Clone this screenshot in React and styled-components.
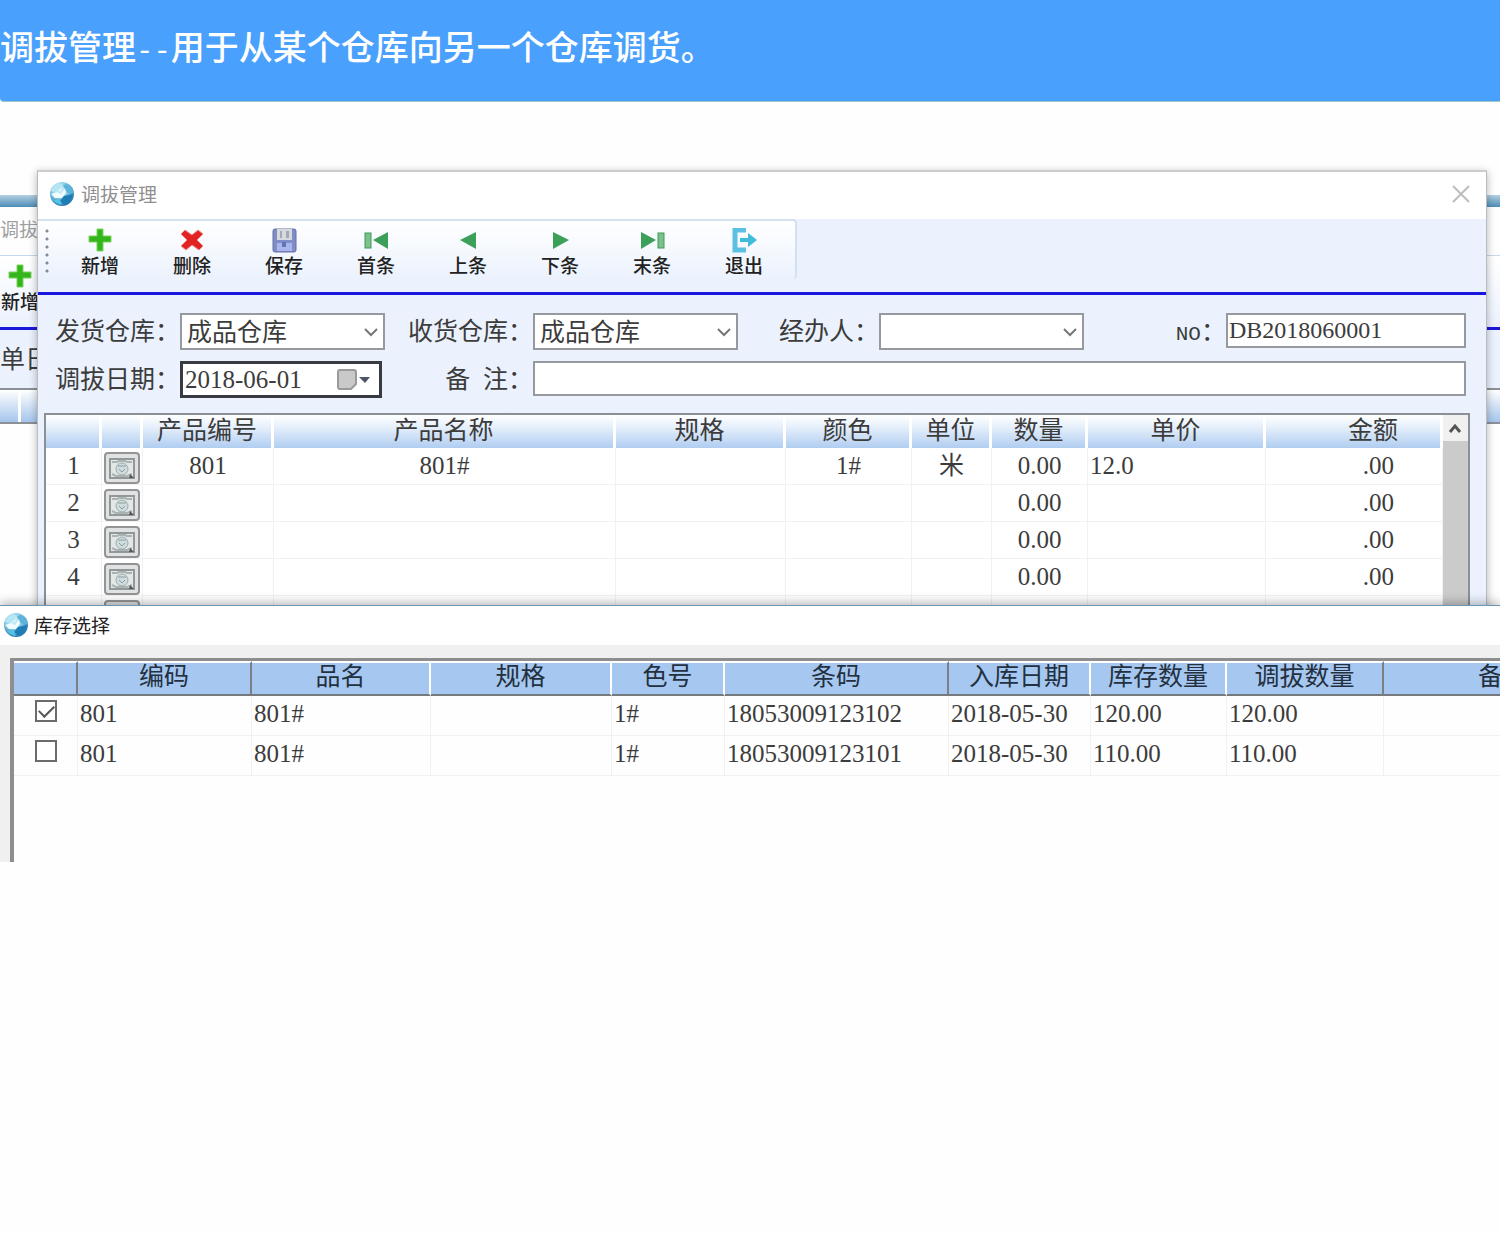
import React from "react";
import styled, { createGlobalStyle } from "styled-components";

const COLORS = {
  banner: "#4aa0fd",
  page: "#fefefe",
  form: "#ebf2fd",
  rule: "#1a17dc",
  line: "#f1f1f1",
  text: "#3c3c3c",
};

const tools = [
  { id: "add", label: "新增" },
  { id: "remove", label: "删除" },
  { id: "save", label: "保存" },
  { id: "first", label: "首条" },
  { id: "prev", label: "上条" },
  { id: "next", label: "下条" },
  { id: "last", label: "末条" },
  { id: "exit", label: "退出" },
];

const productColumns = [
  { title: "", width: 56 },
  { title: "", width: 41 },
  { title: "产品编号", width: 131 },
  { title: "产品名称" },
  { title: "规格", width: 170 },
  { title: "颜色", width: 126 },
  { title: "单位", width: 80 },
  { title: "数量", width: 96 },
  { title: "单价", width: 178 },
  { title: "金额", width: 177, align: "right", pad: 42 },
];

const products = [
  { id: 1, code: "801", name: "801#", color: "1#", unit: "米", price: "12.0" },
  { id: 2 },
  { id: 3 },
  { id: 4 },
  { id: 5 },
];

const stockColumns = [
  { title: "", width: 64, dark: true },
  { title: "编码", width: 174, dark: true },
  { title: "品名", width: 179 },
  { title: "规格", width: 181 },
  { title: "色号", width: 113 },
  { title: "条码", width: 224, dark: true },
  { title: "入库日期", width: 142 },
  { title: "库存数量", width: 136 },
  { title: "调拔数量", width: 157, dark: true },
  { title: "备注", width: 240 },
];

const stock = [
  {
    checked: true,
    cells: ["801", "801#", "", "1#", "18053009123102", "2018-05-30", "120.00", "120.00", ""],
  },
  {
    checked: false,
    cells: ["801", "801#", "", "1#", "18053009123101", "2018-05-30", "110.00", "110.00", ""],
  },
];

const Globe = () => (
  <svg width="28" height="28" viewBox="0 0 28 28" aria-hidden="true">
    <defs>
      <radialGradient id="globe" cx="0.4" cy="0.3" r="0.75">
        <stop offset="0" stopColor="#eafaff" />
        <stop offset="0.5" stopColor="#7cc6e4" />
        <stop offset="1" stopColor="#1c6ba3" />
      </radialGradient>
    </defs>
    <circle cx="14" cy="14" r="12" fill="url(#globe)" />
    <path d="M3 11 Q5 4 12 3 L15 6 L11 10 L6 12 Z" fill="#b5e6f4" />
    <path d="M15 5 L19 4 Q25 8 26 13 L20 13 L17 10 Z" fill="#5cb4da" />
    <path d="M3 14 L9 12 L13 14 L17 8 L18 13 L14 18 L7 18 Z" fill="#f1fcff" />
    <path d="M16 16 L25 14 Q24 22 17 25 L12 21 Z" fill="#1f7db6" />
    <path d="M5 20 L12 20 L14 25 Q8 24 5 20 Z" fill="#4fc3e8" />
  </svg>
);

const ToolIcon = ({ id }) => {
  const shapes = {
    add: (
      <path d="M9 1h6v7h8v6h-8v9H9v-9H1V8h8z" fill="#35b51c" stroke="#7bd45c" />
    ),
    remove: (
      <path
        d="M5 2l7 5 6-5 5 4-6 6 6 6-4 4-7-5-6 5-5-4 6-6-6-6z"
        fill="#e12423"
        stroke="#f08a84"
      />
    ),
    save: (
      <>
        <rect x="1" y="1" width="23" height="23" rx="2" fill="#7f8cc8" stroke="#6670a4" />
        <rect x="5" y="1" width="15" height="11" fill="#d6d9dd" />
        <path d="M8 3h2v7H8zM14 3h3v7h-3z" fill="#a3a9b4" />
        <rect x="5" y="15" width="15" height="8" fill="#a9b6ec" />
        <rect x="10" y="14" width="4" height="5" fill="#6473b4" />
      </>
    ),
    first: (
      <>
        <rect x="1" y="5" width="6" height="15" fill="#7cc18c" stroke="#3e9a58" />
        <path d="M9 12L24 4v17z" fill="#3da05a" />
      </>
    ),
    prev: <path d="M4 12L20 4v17z" fill="#3da05a" />,
    next: <path d="M21 12L5 4v17z" fill="#3da05a" />,
    last: (
      <>
        <path d="M16 12L1 4v17z" fill="#3da05a" />
        <rect x="18" y="5" width="6" height="15" fill="#7cc18c" stroke="#3e9a58" />
      </>
    ),
    exit: (
      <>
        <path d="M14 2H3v20h11" fill="none" stroke="#5cc0e2" strokeWidth="5" />
        <path d="M8 10h8V5l9 7-9 7v-5H8z" fill="#3fbcd8" />
      </>
    ),
  };
  return (
    <svg width="25" height="25" viewBox="0 0 25 25" aria-hidden="true">
      {shapes[id]}
    </svg>
  );
};

const PickIcon = () => (
  <svg width="28" height="23" viewBox="0 0 28 23" aria-hidden="true">
    <rect x="2" y="2" width="24" height="19" fill="#e3e8e7" stroke="#92979a" strokeWidth="2" />
    <path d="M4 5h5l2-1h6l2 1h5M4 17l4 2h11l5-2" stroke="#aab2b2" strokeWidth="2" fill="none" />
    <circle cx="14" cy="12" r="6" fill="#cfdcdd" stroke="#9eacae" />
    <path d="M10 9h8M11 12l3 3 3-3" stroke="#8b9da0" fill="none" />
    <path d="M22 17l4 4h-5z" fill="#555" />
  </svg>
);

const Chevron = () => (
  <svg width="16" height="10" viewBox="0 0 16 10" aria-hidden="true">
    <path d="M2 2l6 6 6-6" fill="none" stroke="#777" strokeWidth="2" />
  </svg>
);

const Warehouse = ({ id, label, value }) => (
  <>
    <Label htmlFor={id}>{label}：</Label>
    <SelectBox>
      <Select id={id} defaultValue={value}>
        <option>{value}</option>
      </Select>
      <Chevron />
    </SelectBox>
  </>
);

const ProductTable = () => (
  <Table>
    <colgroup>
      {productColumns.map((col, i) => (
        <Col key={i} $width={col.width} />
      ))}
    </colgroup>
    <thead>
      <tr>
        {productColumns.map((col, i) => (
          <ProductHead key={i} $align={col.align} $pad={col.pad}>
            {col.title}
          </ProductHead>
        ))}
      </tr>
    </thead>
    <tbody>
      {products.map((row) => (
        <tr key={row.id}>
          <ProductCell>{row.id}</ProductCell>
          <ProductCell>
            <PickButton type="button" aria-label="选择产品">
              <PickIcon />
            </PickButton>
          </ProductCell>
          <ProductCell>{row.code}</ProductCell>
          <ProductCell>{row.name}</ProductCell>
          <ProductCell />
          <ProductCell>{row.color}</ProductCell>
          <ProductCell>{row.unit}</ProductCell>
          <ProductCell>0.00</ProductCell>
          <ProductCell $align="left" $pad={2}>
            {row.price}
          </ProductCell>
          <ProductCell $align="right" $pad={48}>
            .00
          </ProductCell>
        </tr>
      ))}
    </tbody>
  </Table>
);

const StockTable = () => (
  <StockGrid>
    <colgroup>
      {stockColumns.map((col, i) => (
        <Col key={i} $width={col.width} />
      ))}
    </colgroup>
    <thead>
      <tr>
        {stockColumns.map((col, i) => (
          <StockHead key={i} $dark={col.dark}>
            {col.title}
          </StockHead>
        ))}
      </tr>
    </thead>
    <tbody>
      {stock.map((row, i) => (
        <tr key={i}>
          <CheckCell>
            <Checkbox
              type="checkbox"
              defaultChecked={row.checked}
              aria-label={row.cells[4]}
            />
          </CheckCell>
          {row.cells.map((cell, j) => (
            <StockCell key={j}>{cell}</StockCell>
          ))}
        </tr>
      ))}
    </tbody>
  </StockGrid>
);

export default function App() {
  return (
    <>
      <GlobalStyle />
      <Banner>
        调拔管理<Dash>--</Dash>用于从某个仓库向另一个仓库调货。
      </Banner>
      <Desktop>
        <BackWindow>
          <BackFrame />
          <BackTitle>调拔管理</BackTitle>
          <BackTools>
            <Tool type="button" $narrow>
              <ToolIcon id="add" />
              新增
            </Tool>
          </BackTools>
          <BackForm>单日期</BackForm>
          <BackHead>
            <span />
            <span />
          </BackHead>
        </BackWindow>

        <MainWindow>
          <TitleBar>
            <Globe />
            <span>调拔管理</span>
            <Close type="button" aria-label="关闭">
              <svg width="18" height="18" viewBox="0 0 18 18">
                <path d="M1 1l16 16M17 1L1 17" stroke="#bdbdbd" strokeWidth="2" />
              </svg>
            </Close>
          </TitleBar>
          <ToolArea>
            <ToolStrip>
              <Grip />
              {tools.map((tool) => (
                <Tool type="button" key={tool.id}>
                  <ToolIcon id={tool.id} />
                  {tool.label}
                </Tool>
              ))}
            </ToolStrip>
          </ToolArea>
          <Form>
            <Warehouse id="from" label="发货仓库" value="成品仓库" />
            <Warehouse id="to" label="收货仓库" value="成品仓库" />
            <Warehouse id="handler" label="经办人" value="" />
            <Label htmlFor="no">
              <Half>NO</Half>：
            </Label>
            <Input id="no" defaultValue="DB2018060001" />
            <Label htmlFor="date">调拔日期：</Label>
            <DateBox>
              <DateInput id="date" defaultValue="2018-06-01" />
              <svg width="34" height="22" viewBox="0 0 34 22" aria-hidden="true">
                <path d="M1 3q0-2 2-2h14q2 0 2 2v12l-5 5H3q-2 0-2-2z" fill="#c9c9c9" stroke="#9a9a9a" strokeWidth="2" />
                <path d="M22 8h11l-5 6z" fill="#4c5666" />
              </svg>
            </DateBox>
            <Label htmlFor="memo">
              备<Half> </Half>注：
            </Label>
            <Memo id="memo" />
          </Form>
          <ProductBox>
            <ProductTable />
            <ScrollBar>
              <svg width="25" height="26" viewBox="0 0 25 26" aria-hidden="true">
                <rect width="25" height="26" fill="#f0f0f0" />
                <path d="M7 17l5-6 5 6" fill="none" stroke="#555" strokeWidth="3" />
              </svg>
            </ScrollBar>
          </ProductBox>
        </MainWindow>
      </Desktop>

      <StockWindow>
        <StockTitle>
          <Globe />
          <span>库存选择</span>
        </StockTitle>
        <StockBody>
          <StockBox>
            <StockTable />
          </StockBox>
        </StockBody>
      </StockWindow>
    </>
  );
}

const GlobalStyle = createGlobalStyle`
  * {
    box-sizing: border-box;
  }
  body {
    margin: 0;
    background: ${COLORS.page};
    color: ${COLORS.text};
    font-family: "Liberation Serif", "Noto Sans CJK SC", sans-serif;
    font-size: 25px;
    overflow-x: hidden;
  }
  button, input, select {
    font: inherit;
    color: inherit;
  }
`;

const Banner = styled.header`
  height: 102px;
  padding-top: 22px;
  border-bottom: 1px solid #9cc6c8;
  border-bottom-left-radius: 4px;
  background: ${COLORS.banner};
  color: #fff;
  font-family: "Noto Sans CJK SC", sans-serif;
  font-size: 34px;
  font-weight: 500;
  line-height: 48px;
`;
const Dash = styled.span`
  font-family: "Liberation Mono", monospace;
  font-size: 29px;
`;
const Half = styled.span`
  font-family: "Liberation Mono", monospace;
  font-size: 21px;
`;

//Windows lie over one another, so they share one grid cell
const Desktop = styled.main`
  display: grid;
  grid-template-columns: minmax(0, 1fr);
  height: 503px;
  overflow: hidden;
`;

const BackWindow = styled.section`
  grid-area: 1 / 1;
  margin-top: 93px;
`;
const BackFrame = styled.div`
  height: 12px;
  background: linear-gradient(#b4d0e2, #4d8cb8);
`;
const BackTitle = styled.div`
  height: 48px;
  font-size: 19px;
  line-height: 48px;
  color: #a0a0a0;
`;
const BackTools = styled.div`
  height: 75px;
  padding-top: 1px;
  border-top: 1px solid #c5d9ee;
  border-bottom: 3px solid ${COLORS.rule};
  background: linear-gradient(#fff, ${COLORS.form});
`;
const BackForm = styled.div`
  height: 58px;
  background: ${COLORS.form};
  line-height: 60px;
`;
const BackHead = styled.div`
  display: grid;
  grid-template-columns: 18px 1fr;
  gap: 3px;
  height: 36px;
  border-top: 2px solid #8b9096;
  border-bottom: 2px solid #8b9096;

  span {
    background: linear-gradient(#fff, #a5c5ec);
  }
`;

const MainWindow = styled.section`
  grid-area: 1 / 1;
  z-index: 1;
  display: flex;
  flex-direction: column;
  margin: 68px 13px 0 37px;
  border: 1px solid #b9bcc0;
  border-top: 2px solid #cdcdcd;
  border-bottom: none;
  background: ${COLORS.form};
  box-shadow: 0 2px 8px rgba(0, 0, 0, 0.3);
`;
const TitleBar = styled.div`
  display: flex;
  align-items: center;
  gap: 5px;
  height: 47px;
  padding: 0 16px 4px 10px;
  background: #fff;
  font-size: 19px;
  color: #8f8f8f;
`;
const Close = styled.button`
  display: flex;
  margin-left: auto;
  padding: 0;
  border: none;
  background: none;
`;
const ToolArea = styled.div`
  height: 76px;
  border-bottom: 3px solid ${COLORS.rule};
`;
const ToolStrip = styled.div`
  display: flex;
  width: max-content;
  padding-right: 5px;
  border: 2px solid #d3e0ee;
  border-left: none;
  border-bottom: none;
  border-radius: 0 4px 4px 0;
  background: linear-gradient(#fff, ${COLORS.form});
`;
const Grip = styled.div`
  width: 4px;
  margin: 6px 5px 2px 7px;
  background: radial-gradient(circle, #858b95 1px, transparent 2px) 0 0 / 4px 8px;
`;
const Tool = styled.button`
  display: flex;
  flex-direction: column;
  align-items: center;
  gap: 2px;
  width: ${(props) => (props.$narrow ? "40px" : "92px")};
  height: 58px;
  padding: 7px 0 0;
  border: none;
  background: none;
  font-size: 19px;
  font-weight: 500;
  line-height: 24px;
  white-space: nowrap;
  color: #222;
`;

const Form = styled.form`
  display: grid;
  grid-template-columns: 126px 205px 148px 205px 141px 205px 1fr 240px;
  grid-auto-rows: 37px;
  row-gap: 11px;
  padding: 18px 20px 15px 16px;
`;
const Label = styled.label`
  line-height: 37px;
  text-align: right;
  white-space: nowrap;
`;
const SelectBox = styled.div`
  display: grid;
  align-items: center;

  svg {
    grid-area: 1 / 1;
    justify-self: end;
    margin-right: 6px;
    pointer-events: none;
  }
`;
const Select = styled.select`
  grid-area: 1 / 1;
  appearance: none;
  width: 100%;
  height: 37px;
  padding: 2px 5px 0;
  border: 2px solid #96999d;
  border-radius: 0;
  background: #fff;
`;
const Input = styled.input`
  width: 100%;
  height: 35px;
  padding: 0 1px;
  border: 2px solid #96999d;
  background: #fff;
  font-size: 24px;
`;
const Memo = styled(Input)`
  grid-column: 4 / -1;
`;
const DateBox = styled.div`
  display: flex;
  align-items: center;
  width: 202px;
  padding-right: 8px;
  border: 3px solid #3a3b40;
  background: #fff;
`;
const DateInput = styled.input`
  flex: 1;
  min-width: 0;
  padding: 0 2px;
  border: none;
  background: none;
`;

const ProductBox = styled.div`
  display: flex;
  flex: 1;
  align-items: flex-start;
  min-height: 0;
  margin: 0 16px 0 6px;
  border: 2px solid #8b9096;
  border-bottom: none;
  background: #fff;
  overflow: hidden;
`;
const Table = styled.table`
  flex: 1;
  table-layout: fixed;
  width: 100%;
  border-collapse: separate;
  border-spacing: 0;
`;
const Col = styled.col`
  width: ${(props) => (props.$width ? props.$width + "px" : "auto")};
`;
const ProductHead = styled.th`
  height: 33px;
  padding: 0 ${(props) => props.$pad || 0}px 0 0;
  border-right: 3px solid #fff;
  background: linear-gradient(#fff, #e3eefb 40%, #b0cdf1);
  font-weight: 400;
  line-height: 31px;
  text-align: ${(props) => props.$align || "center"};
  vertical-align: top;
`;
const ProductCell = styled.td`
  height: 37px;
  padding: 0 ${(props) => props.$pad || 0}px;
  border-right: 1px solid ${COLORS.line};
  border-bottom: 1px solid ${COLORS.line};
  line-height: 35px;
  text-align: ${(props) => props.$align || "center"};
  vertical-align: top;
`;
const PickButton = styled.button`
  display: flex;
  align-items: center;
  justify-content: center;
  width: 36px;
  height: 32px;
  margin: 4px 0 0 2px;
  padding: 0;
  border: 2px solid #929496;
  border-radius: 4px;
  background: #e0e2e3;
`;
const ScrollBar = styled.div`
  align-self: stretch;
  flex: none;
  width: 25px;
  background: #cbcbcb;

  svg {
    display: block;
  }
`;

const StockWindow = styled.section`
  position: relative;
  z-index: 2;
  border-top: 1px solid #6a97b5;
  box-shadow: 0 -2px 10px rgba(0, 0, 0, 0.3);
`;
const StockTitle = styled.div`
  display: flex;
  align-items: center;
  gap: 4px;
  height: 39px;
  padding: 0 0 2px 2px;
  background: #fff;
  font-size: 19px;
  color: #222;
`;
const StockBody = styled.div`
  padding: 13px 0 0 10px;
  background: #f0f0f0;
`;
const StockBox = styled.div`
  height: 204px;
  border-top: 3px solid #8e8e8e;
  border-left: 4px solid #8e8e8e;
  background: ${COLORS.page};
  overflow: hidden;
`;
const StockGrid = styled.table`
  table-layout: fixed;
  width: 1610px;
  border-collapse: separate;
  border-spacing: 0;
`;
const StockHead = styled.th`
  height: 35px;
  padding: 0;
  border-top: 2px solid #fff;
  border-right: 2px solid ${(props) => (props.$dark ? "#7c7f83" : "#fff")};
  border-bottom: 2px solid #76797d;
  background: #a6c8f0;
  font-weight: 400;
  line-height: 27px;
  color: #23303f;
  vertical-align: top;
`;
const StockCell = styled.td`
  height: 40px;
  padding: 0 2px;
  border-right: 1px solid ${COLORS.line};
  border-bottom: 1px solid ${COLORS.line};
  line-height: 36px;
  vertical-align: top;
`;
const CheckCell = styled(StockCell)`
  line-height: 0;
  text-align: center;
`;
const Checkbox = styled.input`
  appearance: none;
  width: 22px;
  height: 22px;
  margin: 4px 0 0;
  border: 2px solid #6b6b6b;
  background: #fff;

  &:checked::after {
    content: "";
    display: block;
    width: 13px;
    height: 7px;
    margin: 3px 0 0 2px;
    border-left: 2px solid #555;
    border-bottom: 2px solid #555;
    transform: rotate(-45deg);
  }
`;
